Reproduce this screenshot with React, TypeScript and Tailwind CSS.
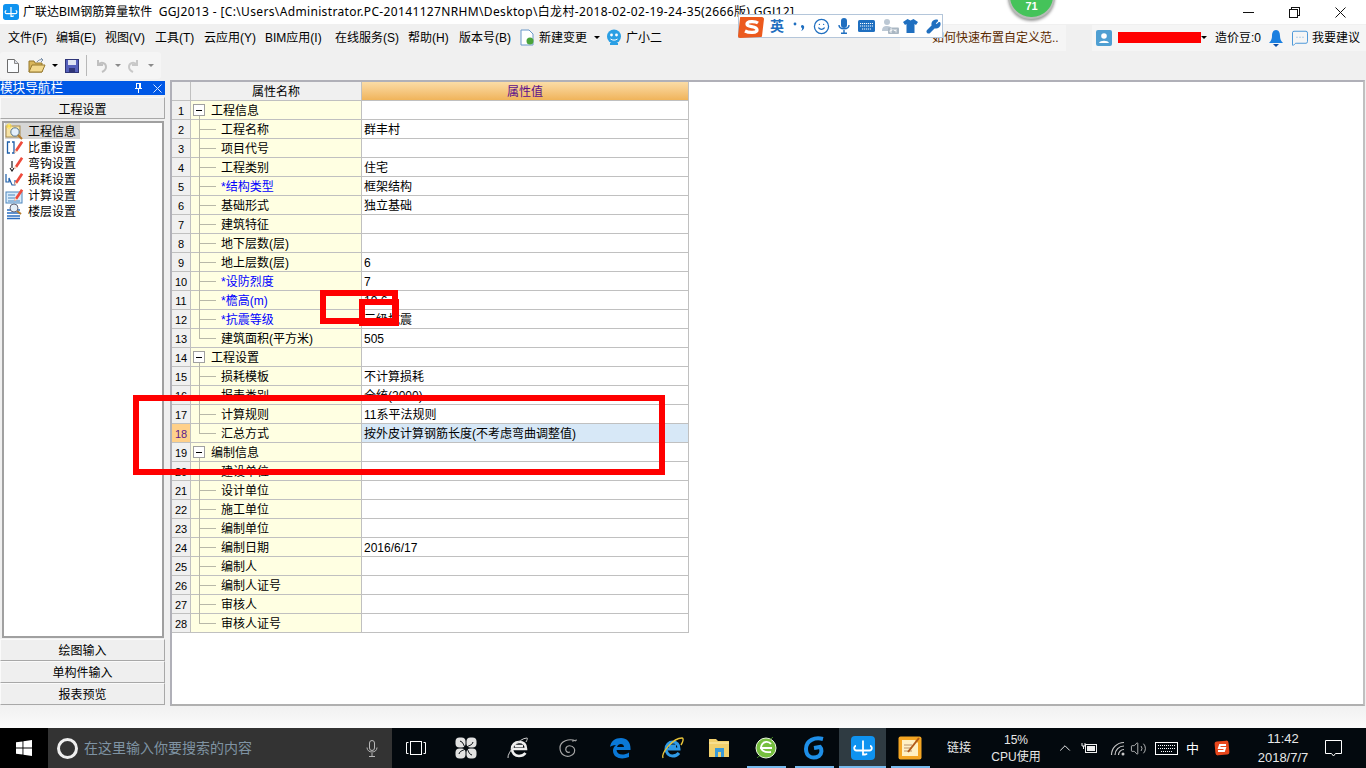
import React from "react";
import { Smile, Volume2, ChevronUp, MessageSquareMore, Wrench } from "lucide-react";

const FONT = "font-['Liberation_Sans','Noto_Sans_CJK_SC',sans-serif]";

type Row = { n: string; v?: string; level?: 0 | 1; blue?: boolean; last?: boolean };
const rows: Row[] = [
  { n: "工程信息", level: 0 },
  { n: "工程名称", v: "群丰村" },
  { n: "项目代号" },
  { n: "工程类别", v: "住宅" },
  { n: "*结构类型", v: "框架结构", blue: true },
  { n: "基础形式", v: "独立基础" },
  { n: "建筑特征" },
  { n: "地下层数(层)" },
  { n: "地上层数(层)", v: "6" },
  { n: "*设防烈度", v: "7", blue: true },
  { n: "*檐高(m)", v: "19.6", blue: true },
  { n: "*抗震等级", v: "三级抗震", blue: true },
  { n: "建筑面积(平方米)", v: "505", last: true },
  { n: "工程设置", level: 0 },
  { n: "损耗模板", v: "不计算损耗" },
  { n: "报表类别", v: "全统(2000)" },
  { n: "计算规则", v: "11系平法规则" },
  { n: "汇总方式", v: "按外皮计算钢筋长度(不考虑弯曲调整值)", last: true },
  { n: "编制信息", level: 0 },
  { n: "建设单位" },
  { n: "设计单位" },
  { n: "施工单位" },
  { n: "编制单位" },
  { n: "编制日期", v: "2016/6/17" },
  { n: "编制人" },
  { n: "编制人证号" },
  { n: "审核人" },
  { n: "审核人证号", last: true },
];

const menus = [
  { t: "文件(F)", w: "w-[48px]" },
  { t: "编辑(E)", w: "w-[49px]" },
  { t: "视图(V)", w: "w-[50px]" },
  { t: "工具(T)", w: "w-[49px]" },
  { t: "云应用(Y)", w: "w-[61px]" },
  { t: "BIM应用(I)", w: "w-[70px]" },
  { t: "在线服务(S)", w: "w-[73px]" },
  { t: "帮助(H)", w: "w-[51px]" },
  { t: "版本号(B)", w: "w-[60px]" },
];

function AppLogo({ size = 16 }: { size?: number }) {
  return (
    <svg width={size} height={size} viewBox="0 0 24 24">
      <rect width="24" height="24" rx="4" fill="#0f93f0" />
      <path d="M12 4.500V19.500M12 17.500a2.500 2.500 0 0 0 4 0M5 10c-2.500 0-2.500 4.500.5 4.500H18.500c3 0 3-4.500.5-4.500" stroke="#fff" strokeWidth="1.800" fill="none" />
    </svg>
  );
}

function NavIcon({ i }: { i: number }) {
  const pencil = (
    <g>
      <path d="m10 11 6-9 2.200 1.500-6 9-2.800 1.500z" fill="#ee4b3c" />
      <path d="m9.500 14 .5-3 2.200 1.500z" fill="#f6e6c8" />
    </g>
  );
  return (
    <svg width="19" height="17" viewBox="0 0 19 17">
      {i === 0 && (
        <g>
          <rect x="1" y="3" width="14" height="11" fill="#f6e3a6" stroke="#a58a50" />
          <circle cx="10" cy="9" r="4.200" fill="#e4f0fb" stroke="#56758e" />
          <path d="m13 12 4 4" stroke="#b47a2d" strokeWidth="2" />
          <path d="M4 0v6M1 3h6M2 1l4 4M6 1 2 5" stroke="#ffe24f" />
        </g>
      )}
      {i === 1 && (
        <g>
          <path d="M5 3H2.500v11H5M7 3h2v11H7" stroke="#1f5fa8" strokeWidth="1.300" fill="none" />
          {pencil}
        </g>
      )}
      {i === 2 && (
        <g>
          <path d="M7 6v7M5 13l2 3 2-3" stroke="#222" strokeWidth="1.200" fill="none" />
          {pencil}
        </g>
      )}
      {i === 3 && (
        <g>
          <path d="M1 3v8h3V7l3 7h3V9" stroke="#1f5fa8" strokeWidth="1.200" fill="none" />
          {pencil}
        </g>
      )}
      {i === 4 && (
        <g>
          <rect x="1" y="5" width="16" height="11" fill="#d9ecfb" stroke="#4d86bd" />
          <path d="M3 8h7M3 11h7M3 14h12" stroke="#4d86bd" />
          {pencil}
        </g>
      )}
      {i === 5 && (
        <g>
          <path d="M2 7h13M2 10h13M2 13h13M2 15.500h13" stroke="#2a6dc0" strokeWidth="1.600" />
          <circle cx="9" cy="5" r="4" fill="#e4eef7" stroke="#667" />
          <path d="m12 8 4 3" stroke="#b47a2d" strokeWidth="2" />
        </g>
      )}
    </svg>
  );
}

function GridRow({ r, i }: { r: Row; i: number }) {
  const selected = i === 17;
  const isGroup = r.level === 0;
  return (
    <div className="flex w-[517px] h-[19px] border-b border-[#c0c0c0]">
      <div className={`w-[19px] shrink-0 border-r border-[#c0c0c0] pt-[2px] flex items-center justify-center text-[11px] ${selected ? "bg-[#ffd08a] text-[#5b1a8c]" : "bg-[#f0f0f0] text-black"}`}>
        {i + 1}
      </div>
      <div className="relative w-[171px] shrink-0 border-r border-[#c0c0c0] bg-[#ffffe2] flex items-center">
        {isGroup ? (
          <>
            <span className="ml-[2px] w-[12px] h-[12px] border border-[#a0a0a0] bg-white flex items-center justify-center">
              <span className="block w-[6px] h-px bg-black" />
            </span>
            <span className="ml-[6px] pt-[2px] text-black">{r.n}</span>
            <span className="absolute left-[8px] top-[15px] h-[4px] w-px bg-[#b8b8a8]" />
          </>
        ) : (
          <>
            <span className={`absolute left-[8px] top-0 w-px bg-[#b8b8a8] ${r.last ? "h-[10px]" : "h-[19px]"}`} />
            <span className="absolute left-[8px] top-[9px] w-[17px] h-px bg-[#b8b8a8]" />
            <span className={`ml-[30px] pt-[2px] ${r.blue ? "text-[#0000ff]" : "text-black"}`}>{r.n}</span>
          </>
        )}
      </div>
      <div className={`w-[327px] shrink-0 border-r border-[#c0c0c0] pl-[2px] pt-[2px] flex items-center text-black ${selected ? "bg-[#d7e8f7]" : "bg-white"}`}>
        {r.v}
      </div>
    </div>
  );
}

function SideButton({ label, cls }: { label: string; cls: string }) {
  return (
    <div className={`${cls} h-[22px] shrink-0 w-[165px] bg-[#efefef] border border-[#fafafa] border-b-[#a8a8a8] border-r-[#a8a8a8] flex items-center justify-center text-black`}>
      {label}
    </div>
  );
}

function TaskIcon({ children, w, active, bar }: { children?: React.ReactNode; w: string; active?: boolean; bar?: string }) {
  return (
    <div className={`relative ${w} h-full shrink-0 flex items-center justify-center ${active ? "bg-[#2f3b42]" : ""}`}>
      {children}
      {bar && <span className={`absolute bottom-0 h-[2px] bg-[#76b9ed] ${bar}`} />}
    </div>
  );
}

const Caret = ({ cls }: { cls: string }) => (
  <span className={`w-0 h-0 border-x-[3px] border-x-transparent border-t-[3px] ${cls}`} />
);

export default function App() {
  return (
    <div className={`${FONT} relative w-[1366px] h-[768px] overflow-hidden bg-[#f0f0f0] text-[12px] leading-none text-black`}>
      {/* Title bar */}
      <div className="h-[24px] bg-white flex items-center">
        <div className="ml-[3px] mr-[4px]"><AppLogo /></div>
        <span className="whitespace-nowrap">广联达BIM钢筋算量软件 <span className="ml-[3px] tracking-[0.35px] font-['Noto_Sans','Noto_Sans_CJK_SC',sans-serif]">GGJ2013 - [C:\Users\Administrator.PC-20141127NRHM\Desktop\白龙村-2018-02-02-19-24-35(2666版).GGJ12]</span></span>
        <div className="ml-auto mr-[3px] flex items-center">
          <div className="w-[46px] flex justify-center">
            <svg width="11" height="11" viewBox="0 0 11 11" shapeRendering="crispEdges"><path d="M0 5.500h11" stroke="#111" /></svg>
          </div>
          <div className="w-[46px] flex justify-center">
            <svg width="11" height="11" viewBox="0 0 11 11" shapeRendering="crispEdges" fill="none" stroke="#111"><rect x=".5" y="2.500" width="8" height="8" /><path d="M2.500 2.500v-2h8v8h-2" /></svg>
          </div>
          <div className="w-[46px] flex justify-center">
            <svg width="11" height="11" viewBox="0 0 11 11" fill="none" stroke="#111"><path d="m.5.500 10 10M10.500.5l-10 10" /></svg>
          </div>
        </div>
      </div>

      {/* Menu bar */}
      <div className="h-[27px] flex items-center bg-[#f0f0f0] pl-[8px]">
        <div className="flex whitespace-nowrap">
          {menus.map((m) => <span key={m.t} className={m.w}>{m.t}</span>)}
        </div>
        <svg className="ml-[1px]" width="15" height="17" viewBox="0 0 15 17">
          <path d="M1 1h8l4 4v11H1z" fill="#fff" stroke="#6a98c9" />
          <circle cx="10" cy="12" r="3.500" fill="#4aa43a" />
        </svg>
        <span className="ml-[4px]">新建变更</span>
        <Caret cls="ml-[7px] border-t-black" />
        <svg className="ml-[5px]" width="18" height="17" viewBox="0 0 18 17">
          <circle cx="9" cy="7.500" r="7" fill="#2a9fe4" />
          <circle cx="6.500" cy="6" r="1.400" fill="#fff" />
          <circle cx="11.500" cy="6" r="1.400" fill="#fff" />
          <path d="M5.500 10c2 1.500 5 1.500 7 0" stroke="#fff" fill="none" />
          <path d="M5 15h8" stroke="#2a9fe4" strokeWidth="2" />
        </svg>
        <span className="ml-[3px]">广小二</span>
        <div className="ml-auto flex items-center h-[26px]">
          <div className="w-[166px] h-[26px] bg-[#f5f5f5] flex items-center pl-[32px] text-[#5b2a00] whitespace-nowrap">如何快速布置自定义范..</div>
          <div className="ml-[26px] flex items-center w-[274px] h-[26px] bg-[#f5f5f5]">
            <svg className="ml-[4px]" width="16" height="16" viewBox="0 0 16 16">
              <rect width="16" height="16" rx="2" fill="#4f9fd2" />
              <circle cx="8" cy="6" r="2.800" fill="#fff" />
              <path d="M3 13c1-3 9-3 10 0z" fill="#fff" />
            </svg>
            <span className="ml-[6px] w-[83px] h-[11px] bg-[#ff0000]" />
            <Caret cls="border-t-black" />
            <span className="ml-[8px] whitespace-nowrap">造价豆:0</span>
            <svg className="ml-[8px]" width="14" height="18" viewBox="0 0 14 18" fill="#1a7fe0">
              <path d="M7 1c3 0 4 3 4 6 0 3 1 5 3 7H0c2-2 3-4 3-7 0-3 1-6 4-6z" />
              <path d="m4 15 3 3 3-3z" fill="#0c4fa8" />
            </svg>
            <MessageSquareMore size={18} strokeWidth={1.200} className="ml-[8px] text-[#3c8fd6]" />
            <span className="ml-[3px] whitespace-nowrap">我要建议</span>
          </div>
        </div>
      </div>

      {/* Toolbar */}
      <div className="h-[29px] flex items-center">
        <div className="flex items-center w-[161px] h-[27px] bg-[#f5f5f5] rounded-[3px] pl-[7px]">
          <svg width="12" height="14" viewBox="0 0 12 14"><path d="M.5.500h7l4 4v9H.5z" fill="#fbfdff" stroke="#6c6c6c" /><path d="M7.500.5v4h4" fill="#d8dde8" stroke="#8a8a8a" /></svg>
          <svg className="ml-[9px]" width="18" height="15" viewBox="0 0 18 15">
            <path d="M1 3h5l1 2h7v9H1z" fill="#d9b65a" stroke="#96782d" />
            <path d="M1 14 4 7h13l-3 7z" fill="#f3d98d" stroke="#96782d" />
            <path d="M9 4c1-2 4-3 6-2M13 0l2 2-2 2" stroke="#7a8fa8" fill="none" />
          </svg>
          <Caret cls="ml-[6px] border-t-black" />
          <svg className="ml-[7px]" width="14" height="14" viewBox="0 0 14 14">
            <rect x=".5" y=".5" width="13" height="13" fill="#5560bb" stroke="#2f3578" />
            <rect x="3" y="1" width="8" height="5" fill="#dfe4f3" />
            <rect x="4" y="9" width="6" height="4" fill="#2f3578" />
          </svg>
          <span className="ml-[7px] w-px h-[21px] bg-[#b8b8b8]" />
          <svg className="ml-[8px]" width="13" height="14" viewBox="0 0 13 14"><path d="M3 1v5h5M3 6c3-4 8-2 8 2 0 2-2 4-4 5" stroke="#c0c0c0" strokeWidth="2" fill="none" /></svg>
          <Caret cls="ml-[7px] border-t-[#8a8a8a]" />
          <svg className="ml-[6px]" width="13" height="14" viewBox="0 0 13 14"><path d="M10 1v5H5M10 6C7 2 2 4 2 8c0 2 2 4 4 5" stroke="#c8c8c8" strokeWidth="2" fill="none" /></svg>
          <Caret cls="ml-[8px] border-t-[#8a8a8a]" />
        </div>
      </div>

      {/* Main */}
      <div className="h-[626px] flex">
        <div className="w-[165px] shrink-0 flex flex-col mb-[1px]">
          <div className="mt-[1px] h-[14px] shrink-0 bg-[#0058e6] text-white flex items-center text-[12.6px] whitespace-nowrap">
            <span>模块导航栏</span>
            <svg className="ml-auto" width="9" height="10" viewBox="0 0 9 10" fill="none" stroke="#fff" shapeRendering="crispEdges">
              <path d="M2.500.5h4v5h-4zM1 5.500h7M4.500 6v4M5.500 1v4" />
            </svg>
            <svg className="ml-[10px] mr-[3px]" width="9" height="9" viewBox="0 0 9 9" fill="none" stroke="#d8e6ff"><path d="m.5.500 8 8M8.500.5l-8 8" /></svg>
          </div>
          <div className="mt-[2px]"><SideButton label="工程设置" cls="pt-[4px]" /></div>
          <div className="flex-1 ml-[2px] mr-[1px] mt-[2px] mb-[1px] border-2 border-[#a0a0a0] bg-white">
            {["工程信息", "比重设置", "弯钩设置", "损耗设置", "计算设置", "楼层设置"].map((t, i) => (
              <div key={t} className={`flex items-center h-[16px] w-[75px] ml-px ${i === 0 ? "bg-[#d6d6d6]" : ""}`}>
                <span className="w-[20px] shrink-0 flex"><NavIcon i={i} /></span>
                <span className="pl-[3px] pt-[2px]">{t}</span>
              </div>
            ))}
          </div>
          <SideButton label="绘图输入" cls="pt-[2px]" />
          <SideButton label="单构件输入" cls="pt-[2px]" />
          <SideButton label="报表预览" cls="pt-[2px]" />
        </div>
        <div className="ml-[5px] w-[1195px] shrink-0 border-2 border-[#b0b0b8] border-r-[#c0c0c0] border-b-[#b0b0b0] bg-white">
          <div className="flex w-[517px] h-[19px] border-b border-[#c0c0c0]">
            <div className="w-[19px] shrink-0 bg-[#f0f0f0] border-r border-[#c0c0c0]" />
            <div className="w-[171px] shrink-0 bg-[#f0f0f0] border-r border-[#c0c0c0] pt-[2px] flex items-center justify-center">属性名称</div>
            <div className="w-[327px] shrink-0 bg-gradient-to-b from-[#fbdca6] to-[#f0b45a] border-r border-[#c0c0c0] pt-[2px] flex items-center justify-center text-[#5b0f8c]">属性值</div>
          </div>
          {rows.map((r, i) => <GridRow key={i} r={r} i={i} />)}
        </div>
      </div>

      {/* Status gap */}
      <div className="h-[22px] bg-gradient-to-b from-[#f1f1f1] to-[#fbfbfb]" />

      {/* Taskbar */}
      <div className="h-[40px] bg-[#03090e] flex items-center text-white">
        <div className="w-[48px] h-full bg-black flex items-center justify-center">
          <svg width="16" height="16" viewBox="0 0 16 16" fill="#fff">
            <path d="M0 2.300 6.500 1.400v6H0zM7.400 1.300 16 0v7.400H7.400zM0 8.400h6.500v6.200L0 13.700zM7.400 8.400H16V16l-8.600-1.200z" />
          </svg>
        </div>
        <div className="w-[344px] h-full bg-[#333333] flex items-center pl-[9px]">
          <span className="w-[21px] h-[21px] rounded-full border-[3px] border-[#eeeeee] shrink-0" />
          <span className="ml-[6px] text-[14px] text-[#7f93a3] whitespace-nowrap">在这里输入你要搜索的内容</span>
          <svg className="ml-auto mr-[14px]" width="12" height="17" viewBox="0 0 12 17" fill="none" stroke="#b8b8b8">
            <rect x="3.500" y=".5" width="5" height="10" rx="2.500" />
            <path d="M1 7.500c0 6 10 6 10 0M6 13v3M3 16.500h6" />
          </svg>
        </div>
        <TaskIcon w="w-[48px]">
          <svg width="20" height="14" viewBox="0 0 20 14" fill="none" stroke="#fff"><rect x="4.500" y=".5" width="11" height="13" /><path d="M2.500 1.500H.5v11h2M17.500 1.500h2v11h-2" /></svg>
        </TaskIcon>
        <TaskIcon w="w-[52px]">
          <svg width="22" height="22" viewBox="0 0 22 22">
            <rect x=".5" y=".5" width="10" height="10" rx="4" fill="#e2e2e2" />
            <rect x="11.500" y=".5" width="10" height="10" rx="4" fill="#e2e2e2" />
            <rect x=".5" y="11.500" width="10" height="10" rx="4" fill="#e2e2e2" />
            <rect x="11.500" y="11.500" width="10" height="10" rx="4" fill="#e2e2e2" />
            <path d="M11 11C8 9 9 5 5 4M11 11c2-3 6-2 7-6M11 11c3 2 2 6 6 7M11 11c-2 3-6 2-7 6" stroke="#03090e" fill="none" />
          </svg>
        </TaskIcon>
        <TaskIcon w="w-[52px]">
          <svg width="22" height="24" viewBox="0 0 22 24" fill="none">
            <path d="M5 13h14c0-5-3-7-7-7s-7 3-7 7 3 7 7 7c3 0 5-1 6.500-3M8 10h8" stroke="#f0f0f0" strokeWidth="2.600" />
            <path d="M1 22C0 17 12 2 20 2c1 0 0 2-1 4" stroke="#cfcfcf" />
          </svg>
        </TaskIcon>
        <TaskIcon w="w-[48px]">
          <svg width="20" height="20" viewBox="0 0 20 20" fill="none" stroke="#a8a8a8" strokeWidth="1.200">
            <path d="M18 3C11 0 2 3 2 10s6 9 10 8 6-5 4-8-7-3-8 0 1 5 4 4" />
            <path d="M19 2c-2 0-3 1-5 1" />
          </svg>
        </TaskIcon>
        <TaskIcon w="w-[56px]">
          <svg width="22" height="22" viewBox="0 0 22 22" fill="#0a78d7">
            <path d="M1 10C2 4 6 1 12 1c6 0 10 4 9.500 12H7.500c.5 5 7 6 12.500 2.500v4.500c-7 3-16 1.500-16-6.500 0-2 1-4 3-5.500-3 0-5 1-6 2zm7 0h7c0-4-6-4-7 0z" />
          </svg>
        </TaskIcon>
        <TaskIcon w="w-[48px]">
          <svg width="24" height="24" viewBox="0 0 24 24" fill="none">
            <path d="M6 13h13c0-5-3-7-6.500-7S6 9 6 13s3 7 6.500 7c3 0 5-1 6.500-3M9 10h7" stroke="#2f9ae6" strokeWidth="3" />
            <path d="M3 22C1 17 13 2 22 2c2 0 1 4-1 7" stroke="#e8c43a" strokeWidth="1.400" />
          </svg>
        </TaskIcon>
        <TaskIcon w="w-[46px]">
          <svg width="22" height="20" viewBox="0 0 22 20">
            <path d="M1 1h7l2 2h11v16H1z" fill="#f2d06c" />
            <path d="M1 5h20" stroke="#fdeeb0" />
            <rect x="7" y="10" width="9" height="9" fill="#3a9ad8" />
            <rect x="10" y="14" width="3" height="5" fill="#f2d06c" />
          </svg>
        </TaskIcon>
        <TaskIcon w="w-[47px]" bar="left-[5px] right-[3px]">
          <svg width="22" height="24" viewBox="0 0 22 24">
            <circle cx="11" cy="12" r="10" fill="#76bf3f" stroke="#eaf6de" />
            <path d="M16 8c-2-3-8-3-9.500 1.500S9 17 16 16M5 12h12" stroke="#fff" strokeWidth="1.800" fill="none" />
            <path d="M18 1c-1 1-2 2-3 2M2 22c1-1 2-2 3-2" stroke="#4f9a2a" />
          </svg>
        </TaskIcon>
        <TaskIcon w="w-[50px]" bar="left-[6px] right-[5px]">
          <svg width="24" height="24" viewBox="0 0 24 24" fill="none">
            <path d="M21 3c-8-2-17 1-17 10s8 10 13 7c3-2 3-7 1-9l-6 1" stroke="#1e8fe8" strokeWidth="4" />
          </svg>
        </TaskIcon>
        <TaskIcon w="w-[47px]" active bar="left-0 right-0"><AppLogo size={24} /></TaskIcon>
        <TaskIcon w="w-[47px]" bar="left-[5px] right-[3px]">
          <svg width="24" height="24" viewBox="0 0 24 24">
            <rect x=".5" y=".5" width="23" height="23" rx="2" fill="#f4a523" />
            <path d="M4 4h13l3 3v13H4z" fill="#fff0c4" />
            <path d="M6 9h8M6 12h8M6 15h8" stroke="#b9926a" />
            <path d="m10 16 11-14" stroke="#b15a1a" strokeWidth="2" />
          </svg>
        </TaskIcon>
        <div className="ml-[14px] w-[32px] text-[#e8e8e8]">链接</div>
        <div className="ml-[1px] w-[72px] flex flex-col items-center gap-[5px] text-[#e8e8e8]">
          <span>15%</span>
          <span>CPU使用</span>
        </div>
        <ChevronUp size={18} strokeWidth={1.200} className="ml-[4px] text-white" />
        <svg className="ml-[7px]" width="17" height="12" viewBox="0 0 17 12" fill="none" stroke="#eee">
          <path d="M1 1v3h3V1M2.500 4v3" />
          <rect x="4.500" y="2.500" width="11" height="8" />
          <rect x="6" y="4" width="8" height="5" fill="#eee" stroke="none" />
        </svg>
        <svg className="ml-[12px]" width="15" height="15" viewBox="0 0 15 15" fill="none" stroke="#c8c8c8" strokeWidth="1.200">
          <path d="M1.500 14C1.500 7 7 1.500 14 1.500M5 14c0-5 4-9 9-9M8.500 14c0-3 2.500-5.500 5.500-5.500" />
          <circle cx="13" cy="13" r="1.500" fill="#c8c8c8" stroke="none" />
        </svg>
        <Volume2 size={17} strokeWidth={1.100} className="ml-[5px] text-[#e0e0e0]" />
        <svg className="ml-[8px]" width="23" height="13" viewBox="0 0 23 13" fill="none" stroke="#fff">
          <rect x=".5" y=".5" width="22" height="12" />
          <path d="M3 3.500h17M3 6.500h17M6 9.500h11" strokeDasharray="1 1" />
        </svg>
        <span className="ml-[8px] text-[13px] text-white">中</span>
        <svg className="ml-[15px]" width="16" height="16" viewBox="0 0 16 16">
          <rect x="1" y="1" width="14" height="14" rx="2.500" fill="#e8471c" transform="rotate(-5 8 8)" />
          <path d="M12 5H6L5 8h6l-1 3H4" stroke="#fff" strokeWidth="2" fill="none" />
        </svg>
        <div className="ml-[18px] w-[70px] flex flex-col items-center gap-[6px] text-[13px] text-[#e8e8e8]">
          <span>11:42</span>
          <span>2018/7/7</span>
        </div>
        <svg className="ml-[7px]" width="17" height="17" viewBox="0 0 17 17" fill="none" stroke="#fff"><path d="M.5.500h16v13h-6l-2 2.500-2-2.500h-6z" /></svg>
      </div>

      {/* Overlays */}
      <div className="absolute left-[1008px] top-[-27px] w-[47px] h-[46px] rounded-full bg-[#45c35a] border-2 border-[#b8bcb8] shadow-[0_2px_3px_rgba(0,0,0,.4)] flex items-end justify-center pb-[5px]">
        <span className="text-white text-[11px] font-bold">71</span>
      </div>

      <div className="absolute left-[738px] top-[14px] w-[205px] h-[24px] bg-white border border-[#b4c6da] flex items-center text-[#1f6fc0]">
        <span className="ml-[31px] text-[14px] font-bold">英</span>
        <svg className="ml-[9px]" width="12" height="14" viewBox="0 0 12 14" fill="#1f6fc0">
          <circle cx="2" cy="5" r="1.400" />
          <path d="M8 7a1.700 1.700 0 0 1 3.200 1c0 2-1.500 3.500-3.200 4 1-1 1.300-2 1-3-.6 0-1-1-1-2z" />
        </svg>
        <Smile size={17} strokeWidth={1.800} className="ml-[8px]" />
        <svg className="ml-[8px]" width="12" height="16" viewBox="0 0 12 16" fill="#1f6fc0">
          <rect x="3" y="0" width="6" height="10" rx="3" />
          <path d="M1 7c0 5 10 5 10 0M6 12v3M3 15.300h6" fill="none" stroke="#1f6fc0" strokeWidth="1.400" />
        </svg>
        <svg className="ml-[8px]" width="17" height="12" viewBox="0 0 17 12">
          <rect width="17" height="12" rx="1.500" fill="#1f6fc0" />
          <path d="M2 3.500h13M2 6h13M4 9h9" stroke="#fff" strokeDasharray="1.200 .8" />
        </svg>
        <svg className="ml-[6px]" width="18" height="15" viewBox="0 0 18 15" fill="#bcc8d4">
          <circle cx="6" cy="3" r="3" />
          <path d="M1 12c0-4 2-5 5-5s4 1 4 2v3z" />
          <rect x="7" y="8.500" width="11" height="6.500" rx="1" fill="#aab7c3" />
          <path d="M9 10h2v1.500H9v1.500h2M13 10v1.500h2M15 10v3.500" stroke="#fff" fill="none" strokeWidth=".8" />
        </svg>
        <svg className="ml-[4px]" width="15" height="14" viewBox="0 0 15 14" fill="#1f6fc0">
          <path d="M4.500 0 7.500 1.500 10.500 0 15 3l-2 3-1.500-1v9h-8V5L2 6 0 3z" />
        </svg>
        <Wrench size={15} strokeWidth={2.600} className="ml-[8px] fill-[#1f6fc0]" />
      </div>
      <div className="absolute left-[737px] top-[16px]">
        <svg width="28" height="23" viewBox="0 0 28 23">
          <path d="M4 1h21c1 0 2 1 2 2l-2 17c0 1-1 1-2 1l-20 1c-1 0-2-1-2-2L3 2c0-1 0-1 1-1z" fill="#ec5a1e" />
          <path d="M21 7c-3-2-11-2-11 1 0 4 10 1 10 6 0 3-8 3-12 1" stroke="#fff" strokeWidth="3.300" fill="none" />
        </svg>
      </div>

      <div className="absolute left-[320px] top-[290px] w-[78px] h-[34px] border-[6px] border-[#ff0000]" />
      <div className="absolute left-[359px] top-[299px] w-[40px] h-[27px] border-[6px] border-[#ff0000]" />
      <div className="absolute left-[133px] top-[395px] w-[532px] h-[80px] border-[6px] border-[#ff0000]" />
    </div>
  );
}
